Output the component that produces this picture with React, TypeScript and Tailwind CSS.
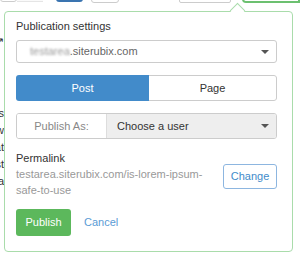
import React from 'react';

const Caret = () => (
  <span className="inline-block w-0 h-0 border-l-[4px] border-r-[4px] border-t-[4px] border-l-transparent border-r-transparent border-t-[#555]" />
);

const App: React.FC = () => {
  return (
    <div className="relative w-[300px] h-[260px] overflow-hidden bg-white font-['Liberation_Sans',Arial,sans-serif] text-[11px] text-[#333]">
      {/* page behind: toolbar bottoms */}
      <div className="flex items-start h-[4px]">
        <div className="w-[18px] h-[10px] -mt-[8px] border border-[#ccc] rounded-b-[3px] bg-white" />
        <div className="w-[26px] h-[10px] -mt-[8px] border-b border-[#e5e5e5] bg-[#fafafa]" />
        <div className="ml-[13px] w-[28px] h-[10px] -mt-[8px] rounded-b-[3px] bg-[#3a74b0]" />
        <div className="ml-[8px] w-[29px] h-[11px] -mt-[8px] border border-[#ccc] rounded-b-[3px] bg-white" />
        <div className="ml-[60px] w-[54px] h-[11px] -mt-[8px] border border-[#ccc] rounded-b-[2px] bg-white" />
        <div className="ml-[11px] w-[60px] h-[11px] -mt-[8px] border-2 border-[#6cc070] rounded-bl-[4px] bg-white" />
      </div>

      {/* page behind: clipped text column */}
      <div className="w-[4px] overflow-hidden mt-[32px]">
        <div className="flex justify-end text-[#333] leading-[10px]">↗</div>
        <div className="flex flex-col items-end mt-[59px] leading-[17px] text-[11px]">
          <div className="whitespace-nowrap">posts</div>
          <div className="whitespace-nowrap">new</div>
          <div className="whitespace-nowrap">that</div>
          <div className="whitespace-nowrap">best</div>
          <div className="whitespace-nowrap">a</div>
        </div>
      </div>

      {/* popover */}
      <div className="absolute left-[4px] top-[11px] w-[289px] h-[241px] bg-white border border-[#a9dcab] rounded-[4px] pl-[11px] pr-[15px] pt-[6px]">
        <div className="absolute left-[227px] -top-[7px] w-[11px] h-[11px] rotate-45 bg-white border-l border-t border-[#a9dcab]" />

        <div className="leading-[16px] text-[11px] text-[#333]">Publication settings</div>

        <div className="mt-[6px] h-[23px] flex items-center justify-between border border-[#ccc] rounded-[3px] pl-[13px] pr-[7px]">
          <span className="text-[#666]">
            <span className="blur-[1.2px] text-[#999]">testarea</span>.siterubix.com
          </span>
          <Caret />
        </div>

        <div className="mt-[12px] h-[26px] flex rounded-[3px] overflow-hidden">
          <div className="w-[133px] flex items-center justify-center bg-[#428bca] text-white">Post</div>
          <div className="flex-1 flex items-center justify-center border border-l-0 border-[#ccc] rounded-r-[3px] text-[#333]">Page</div>
        </div>

        <div className="mt-[12px] h-[26px] flex border border-[#ccc] rounded-[3px] overflow-hidden">
          <div className="w-[90px] flex items-center justify-center bg-white text-[#888] border-r border-[#ddd]">Publish As:</div>
          <div className="flex-1 flex items-center justify-between bg-[#eee] pl-[10px] pr-[7px] text-[#333]">
            <span>Choose a user</span>
            <Caret />
          </div>
        </div>

        <div className="mt-[11px] flex items-start justify-between">
          <div className="leading-[16px]">
            <div className="text-[#333]">Permalink</div>
            <div className="text-[#999]">testarea.siterubix.com/is-lorem-ipsum-</div>
            <div className="text-[#999]">safe-to-use</div>
          </div>
          <button className="mt-[14px] w-[54px] h-[25px] border border-[#8db6e0] rounded-[3px] text-[#428bca] text-[11px] bg-white">
            Change
          </button>
        </div>

        <div className="mt-[11px] flex items-center">
          <button className="w-[55px] h-[27px] bg-[#5cb85c] rounded-[3px] text-white text-[11px]">Publish</button>
          <span className="ml-[13px] text-[#5a9bd5]">Cancel</span>
        </div>
      </div>
    </div>
  );
};

export default App;
